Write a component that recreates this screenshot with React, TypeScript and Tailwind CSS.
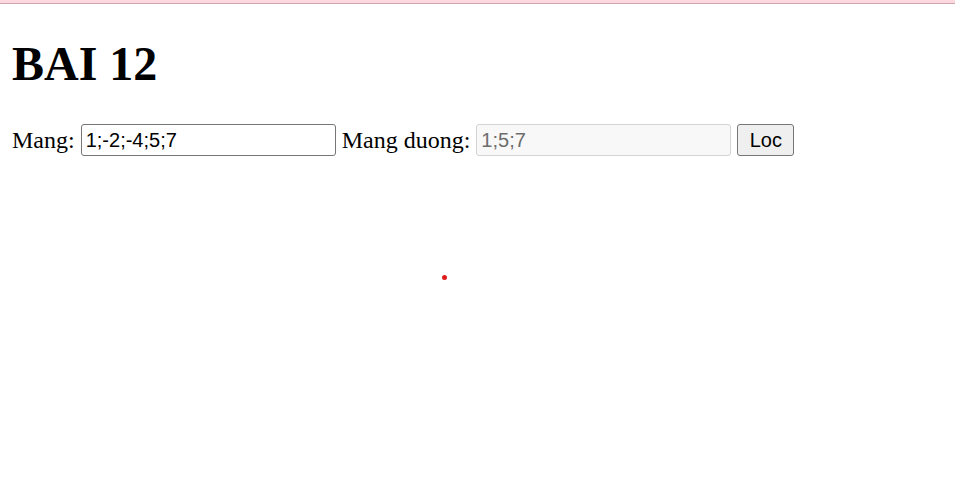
export default function App() {
  return (
    <div className="relative min-h-[504px] bg-white text-black">
      <div className="h-[4px] border-b border-[#cfa7ae] bg-[#fdd9df]" />
      <div className="px-[12px] font-['Liberation_Serif',serif] text-[24px]">
        <h1 className="mt-[32px] mb-[31px] text-[48px] leading-[55px] font-bold">BAI 12</h1>
        <div className="flex items-center">
          <span>Mang:</span>
          <input
            type="text"
            defaultValue="1;-2;-4;5;7"
            className="ml-[6px] h-[32px] w-[255px] rounded-[3px] border border-[#767676] bg-white pl-[4px] font-['Liberation_Sans',sans-serif] text-[20px] text-black outline-none"
          />
          <span className="ml-[6px]">Mang duong:</span>
          <input
            type="text"
            readOnly
            defaultValue="1;5;7"
            className="ml-[6px] h-[32px] w-[255px] rounded-[3px] border border-[#d4d4d4] bg-[#f8f8f8] pl-[4px] font-['Liberation_Sans',sans-serif] text-[20px] text-[#6d6d6d] outline-none"
          />
          <button
            type="button"
            className="ml-[6px] h-[32px] w-[57px] rounded-[3px] border border-[#767676] bg-[#efefef] font-['Liberation_Sans',sans-serif] text-[20px] text-black"
          >
            Loc
          </button>
        </div>
      </div>
      <div className="absolute left-[442px] top-[275px] size-[5px] rounded-full bg-[#e01c1c]" />
    </div>
  );
}
